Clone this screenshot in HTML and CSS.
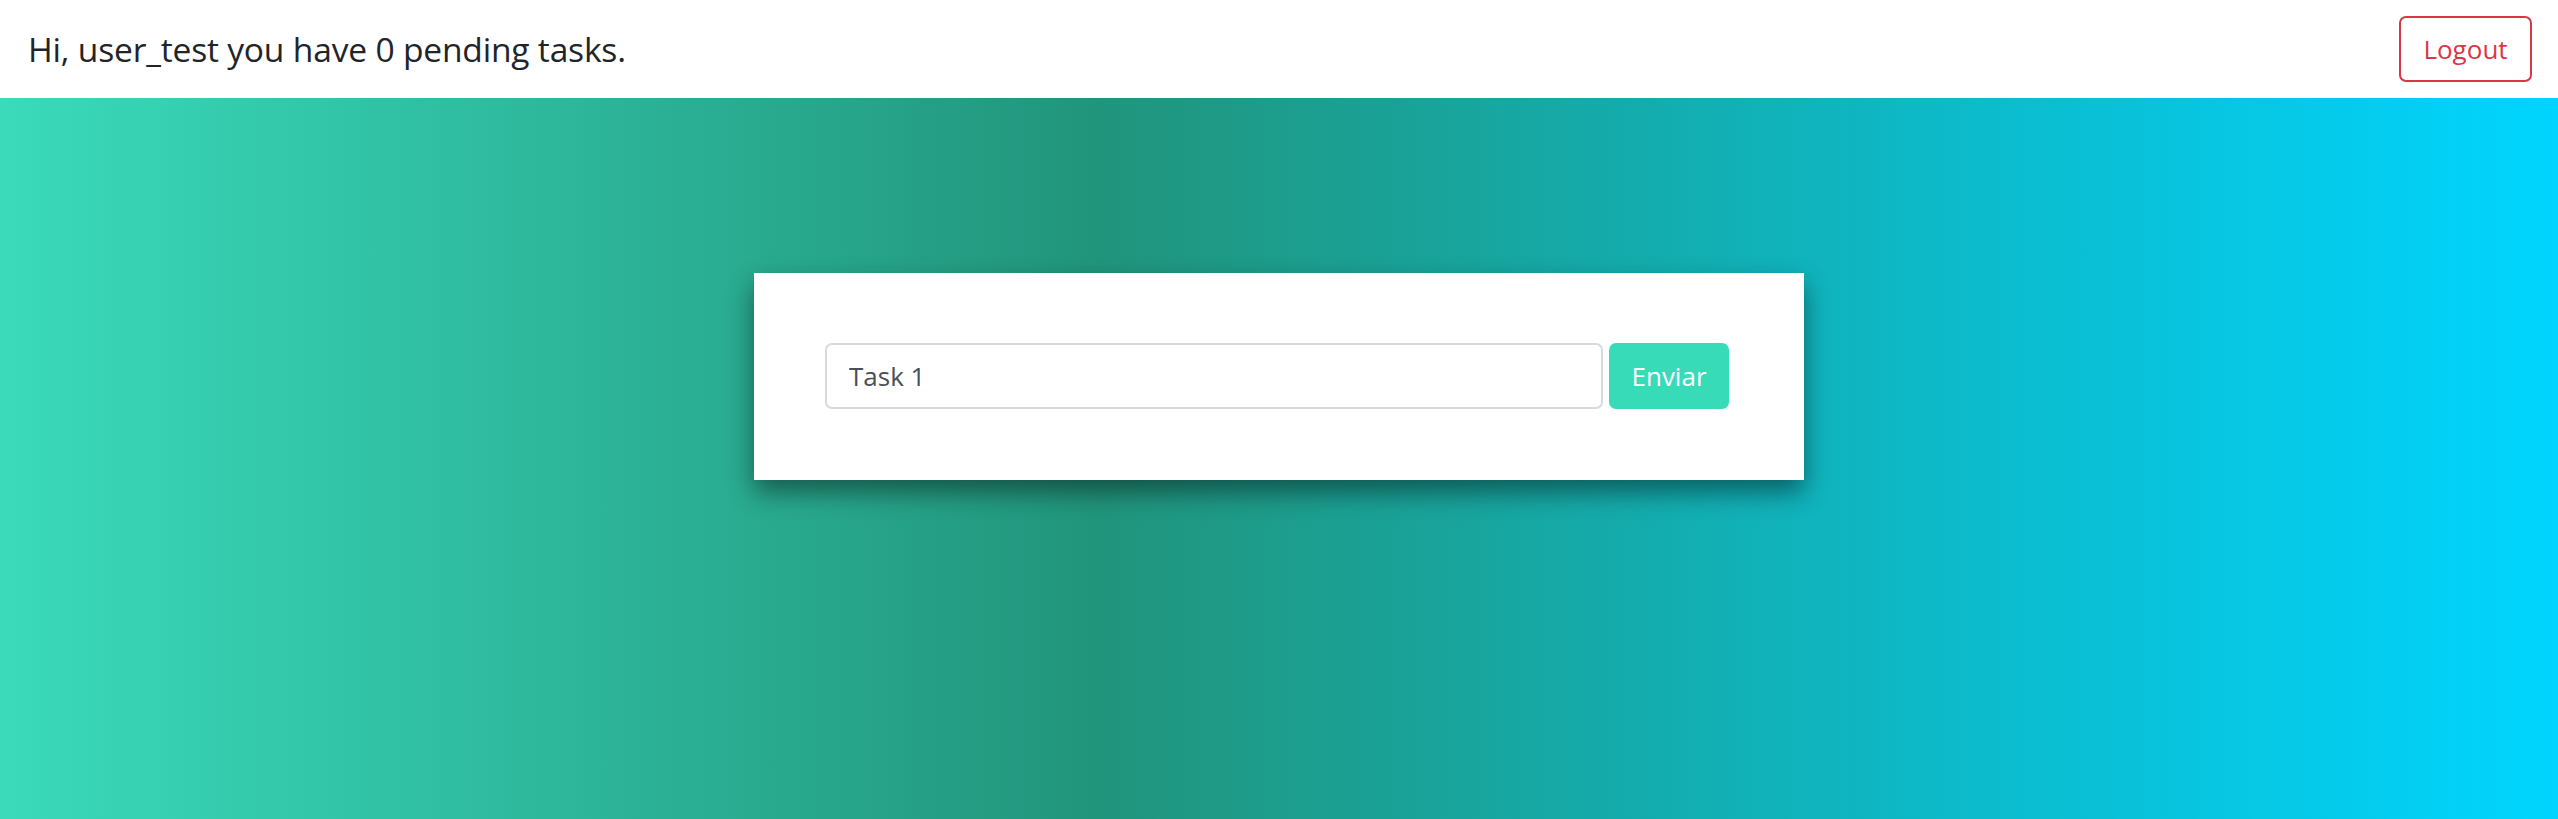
FILE: index.html
```html
<!DOCTYPE html>
<html lang="en">
<head>
<meta charset="utf-8">
<title>Tasks</title>
<link rel="stylesheet" href="styles.css">
</head>
<body>
  <header class="topbar">
    <h1 class="greeting">Hi, user_test you have 0 pending tasks.</h1>
    <button class="btn-logout" type="button">Logout</button>
  </header>
  <main class="stage">
    <section class="card">
      <form class="task-form">
        <input class="task-input" type="text" value="Task 1">
        <button class="btn-send" type="button">Enviar</button>
      </form>
    </section>
  </main>
</body>
</html>
```

FILE: styles.css
```css
* { box-sizing: border-box; }

html, body {
  margin: 0;
  padding: 0;
  height: 100%;
}

body {
  font-family: "Open Sans", "Noto Sans", "Liberation Sans", sans-serif;
  color: #212529;
  display: flex;
  flex-direction: column;
  background: #fff;
}

.topbar {
  height: 98px;
  flex: 0 0 98px;
  display: flex;
  align-items: center;
  justify-content: space-between;
  padding: 0 26px 0 28px;
  background: #fff;
}

.greeting {
  margin: 0;
  font-size: 33.6px;
  font-weight: 400;
  line-height: 1.2;
  color: #212529;
  letter-spacing: -0.2px;
}

.btn-logout {
  font-family: inherit;
  font-size: 26px;
  color: #dc3545;
  background: #fff;
  border: 2px solid #dc3545;
  border-radius: 7px;
  width: 133px;
  height: 66px;
  padding: 0;
  cursor: pointer;
}

.stage {
  flex: 1 1 auto;
  display: flex;
  justify-content: center;
  align-items: flex-start;
  padding-top: 175px;
  background: linear-gradient(to right, #3adabb 0%, #21957c 43%, #0fb5c0 72%, #00d5ff 100%);
}

.card {
  width: 1050px;
  height: 207px;
  background: #fff;
  padding: 70px 75px 71px 71px;
  box-shadow: 0 12px 24px rgba(0, 0, 0, 0.45);
}

.task-form {
  display: flex;
  gap: 6px;
  align-items: stretch;
  height: 66px;
}

.task-input {
  flex: 1 1 auto;
  font-family: inherit;
  font-size: 26px;
  color: #495057;
  border: 2px solid #d6dade;
  border-radius: 7px;
  padding: 0 22px;
  height: 66px;
  outline: none;
  background: #fff;
}

.btn-send {
  flex: 0 0 120px;
  font-family: inherit;
  font-size: 26px;
  color: #fff;
  background: #38dbb8;
  border: none;
  border-radius: 7px;
  height: 66px;
  padding: 0;
  cursor: pointer;
}
```
